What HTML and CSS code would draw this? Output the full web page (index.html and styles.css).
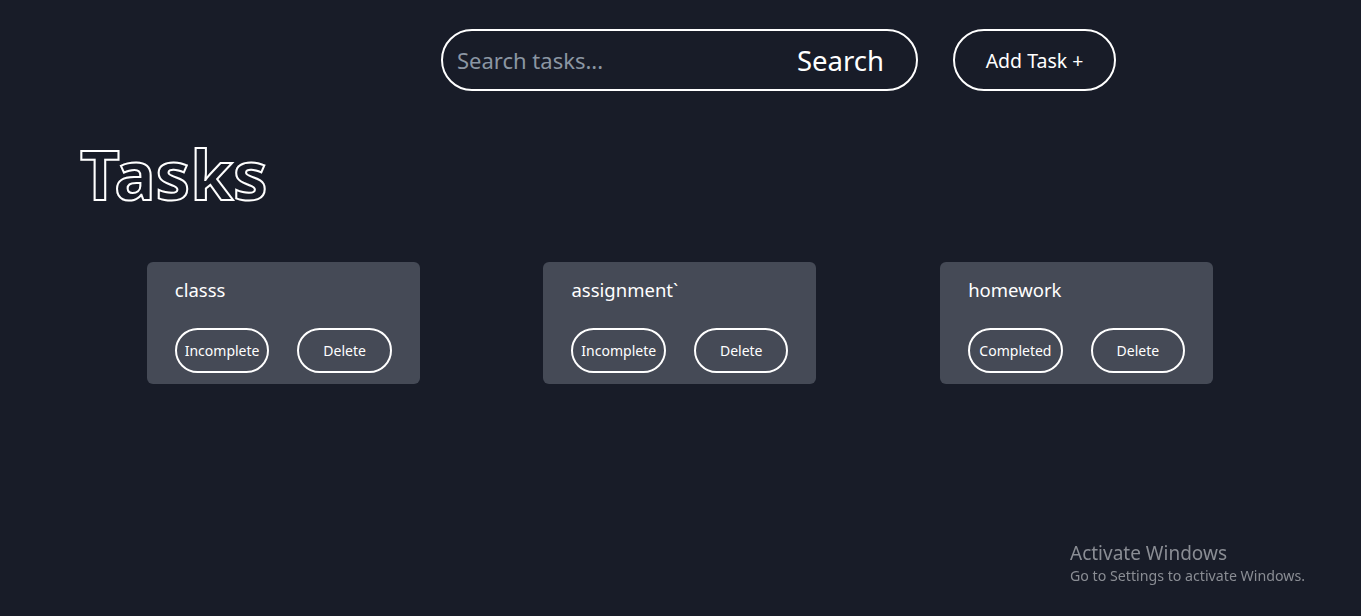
FILE: index.html
```html
<!DOCTYPE html>
<html lang="en">
<head>
<meta charset="utf-8">
<title>Tasks</title>
<link rel="stylesheet" href="styles.css">
</head>
<body>
<header class="topbar">
  <form class="search">
    <input class="search-input" type="text" placeholder="Search tasks...">
    <button class="search-btn" type="button">Search</button>
  </form>
  <button class="add-btn" type="button">Add Task +</button>
</header>
<h1 class="title">Tasks</h1>
<main class="grid">
  <div class="card">
    <div class="card-name">classs</div>
    <div class="card-actions">
      <button class="pill" type="button">Incomplete</button>
      <button class="pill" type="button">Delete</button>
    </div>
  </div>
  <div class="card">
    <div class="card-name">assignment`</div>
    <div class="card-actions">
      <button class="pill" type="button">Incomplete</button>
      <button class="pill" type="button">Delete</button>
    </div>
  </div>
  <div class="card">
    <div class="card-name">homework</div>
    <div class="card-actions">
      <button class="pill" type="button">Completed</button>
      <button class="pill" type="button">Delete</button>
    </div>
  </div>
</main>
<div class="watermark">
  <div class="wm-title">Activate Windows</div>
  <div class="wm-sub">Go to Settings to activate Windows.</div>
</div>
</body>
</html>
```
FILE: styles.css
```css
* { box-sizing: border-box; }
html, body { height: 100%; }
body {
  margin: 0;
  background: #181c28;
  color: #ffffff;
  font-family: "Noto Sans", "Open Sans", sans-serif;
  overflow: hidden;
}
.topbar {
  display: flex;
  padding: 29px 0 0 441px;
  gap: 35px;
}
.search {
  display: flex;
  align-items: center;
  width: 477px;
  height: 62px;
  border: 2px solid #ffffff;
  border-radius: 31px;
  padding: 0 32px 0 14px;
  margin: 0;
}
.search-input {
  flex: 1;
  min-width: 0;
  background: transparent;
  border: none;
  outline: none;
  color: #ffffff;
  font-family: inherit;
  font-size: 22px;
  padding: 0;
}
.search-input::placeholder { color: #8b96a3; }
.search-btn {
  background: transparent;
  border: none;
  color: #ffffff;
  font-family: inherit;
  font-size: 27.5px;
  padding: 0;
}
.add-btn {
  width: 163px;
  height: 62px;
  border: 2px solid #ffffff;
  border-radius: 31px;
  background: transparent;
  color: #ffffff;
  font-family: inherit;
  font-size: 19.5px;
  padding: 0;
}
.title {
  margin: 40px 0 0 80px;
  font-size: 69px;
  font-weight: 700;
  line-height: 84px;
  color: transparent;
  -webkit-text-stroke: 2px #ffffff;
}
.grid {
  display: grid;
  grid-template-columns: repeat(3, 1fr);
  justify-items: center;
  padding: 0 86px 0 85px;
  margin-top: 47px;
}
.card {
  width: 273px;
  height: 122px;
  background: #454a56;
  border-radius: 6px;
  padding: 16px 28px 0;
}
.card-name {
  font-size: 18.5px;
  line-height: 24px;
}
.card-actions {
  display: flex;
  gap: 28px;
  margin-top: 26px;
}
.pill {
  width: 95px;
  height: 45px;
  border: 2px solid #ffffff;
  border-radius: 23px;
  background: transparent;
  color: #ffffff;
  font-family: inherit;
  font-size: 14px;
  padding: 0;
}
.watermark {
  position: fixed;
  left: 1070px;
  top: 541px;
  color: #8a8d94;
}
.wm-title { font-size: 19px; line-height: 25px; }
.wm-sub { font-size: 14.2px; line-height: 20px; }
```
